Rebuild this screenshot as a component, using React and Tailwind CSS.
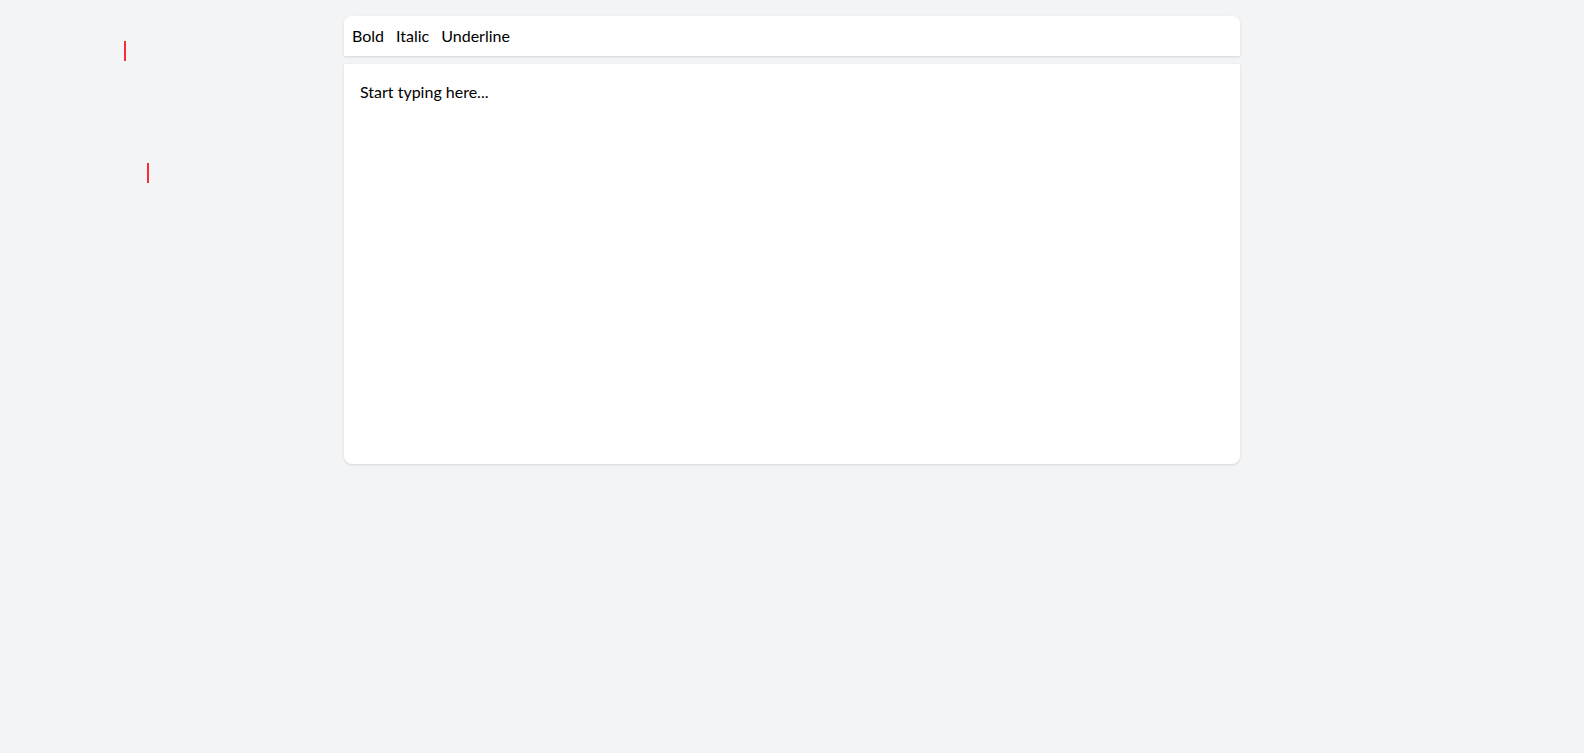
import React, { useState } from 'react';

const tools = ['Bold', 'Italic', 'Underline'];

const App = () => {
  const [text] = useState('Start typing here...');

  return (
    <div
      className="relative min-h-[753px] w-full bg-gray-100 text-black"
      style={{ fontFamily: '"Segoe UI", Lato, "Noto Sans", sans-serif' }}
    >
      {/* Stray caret markers */}
      <span className="absolute left-[124px] top-[41px] h-[20px] w-[2px] bg-red-500" />
      <span className="absolute left-[147px] top-[163px] h-[20px] w-[2px] bg-red-500" />

      <div className="pt-4">
        <div className="mx-auto flex max-w-4xl flex-col gap-2">
          {/* Toolbar */}
          <div className="flex items-center gap-1 rounded-t-lg bg-white p-1 shadow-sm">
            {tools.map((t) => (
              <button key={t} className="px-1 py-1 text-base leading-6">
                {t}
              </button>
            ))}
          </div>

          {/* Editor */}
          <div className="h-[400px] rounded-b-lg bg-white p-4 text-base leading-6 shadow-sm">
            {text}
          </div>
        </div>
      </div>
    </div>
  );
};

export default App;
